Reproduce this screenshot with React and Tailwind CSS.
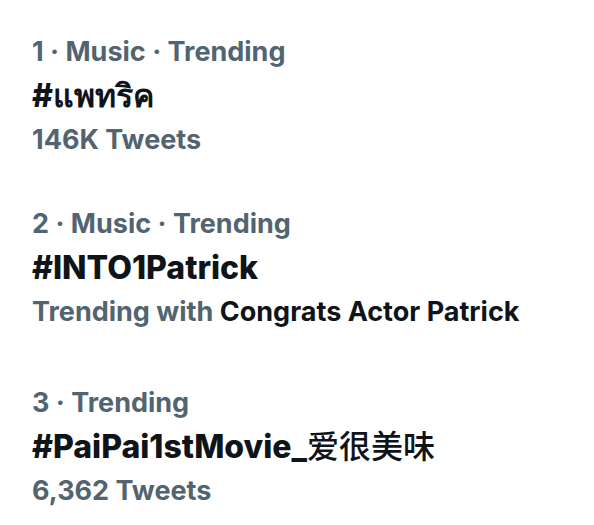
export default function App() {
  const trends = [
    { rank: 1, context: "Music · Trending", tag: <>#แพทริค</>, meta: <>146K Tweets</>, gap: "mt-0" },
    {
      rank: 2,
      context: "Music · Trending",
      tag: <>#INTO1Patrick</>,
      meta: (
        <>
          Trending with <span className="text-[#0f1419]">Congrats Actor Patrick</span>
        </>
      ),
      gap: "mt-[40px]",
    },
    {
      rank: 3,
      context: "Trending",
      tag: (
        <>
          #PaiPai1stMovie_<span className="font-medium">爱很美味</span>
        </>
      ),
      meta: <>6,362 Tweets</>,
      gap: "mt-[47px]",
    },
  ];

  return (
    <div
      className="w-[594px] h-[525px] bg-white pt-[30px] pl-[32px] flex flex-col overflow-hidden"
      style={{ fontFamily: 'Inter, "Noto Sans", "Noto Sans CJK SC", sans-serif' }}
    >
      {trends.map((t) => (
        <div key={t.rank} className={`flex flex-col ${t.gap}`}>
          <p className="h-[44px] flex items-center text-[27px] font-bold text-[#536471] whitespace-nowrap">
            {t.rank} · {t.context}
          </p>
          <p className="h-[44px] flex items-center text-[32px] font-extrabold text-[#0f1419] whitespace-pre">
            {t.tag}
          </p>
          <p className="h-[44px] flex items-center text-[27px] font-bold text-[#536471] whitespace-pre">
            {t.meta}
          </p>
        </div>
      ))}
    </div>
  );
}
